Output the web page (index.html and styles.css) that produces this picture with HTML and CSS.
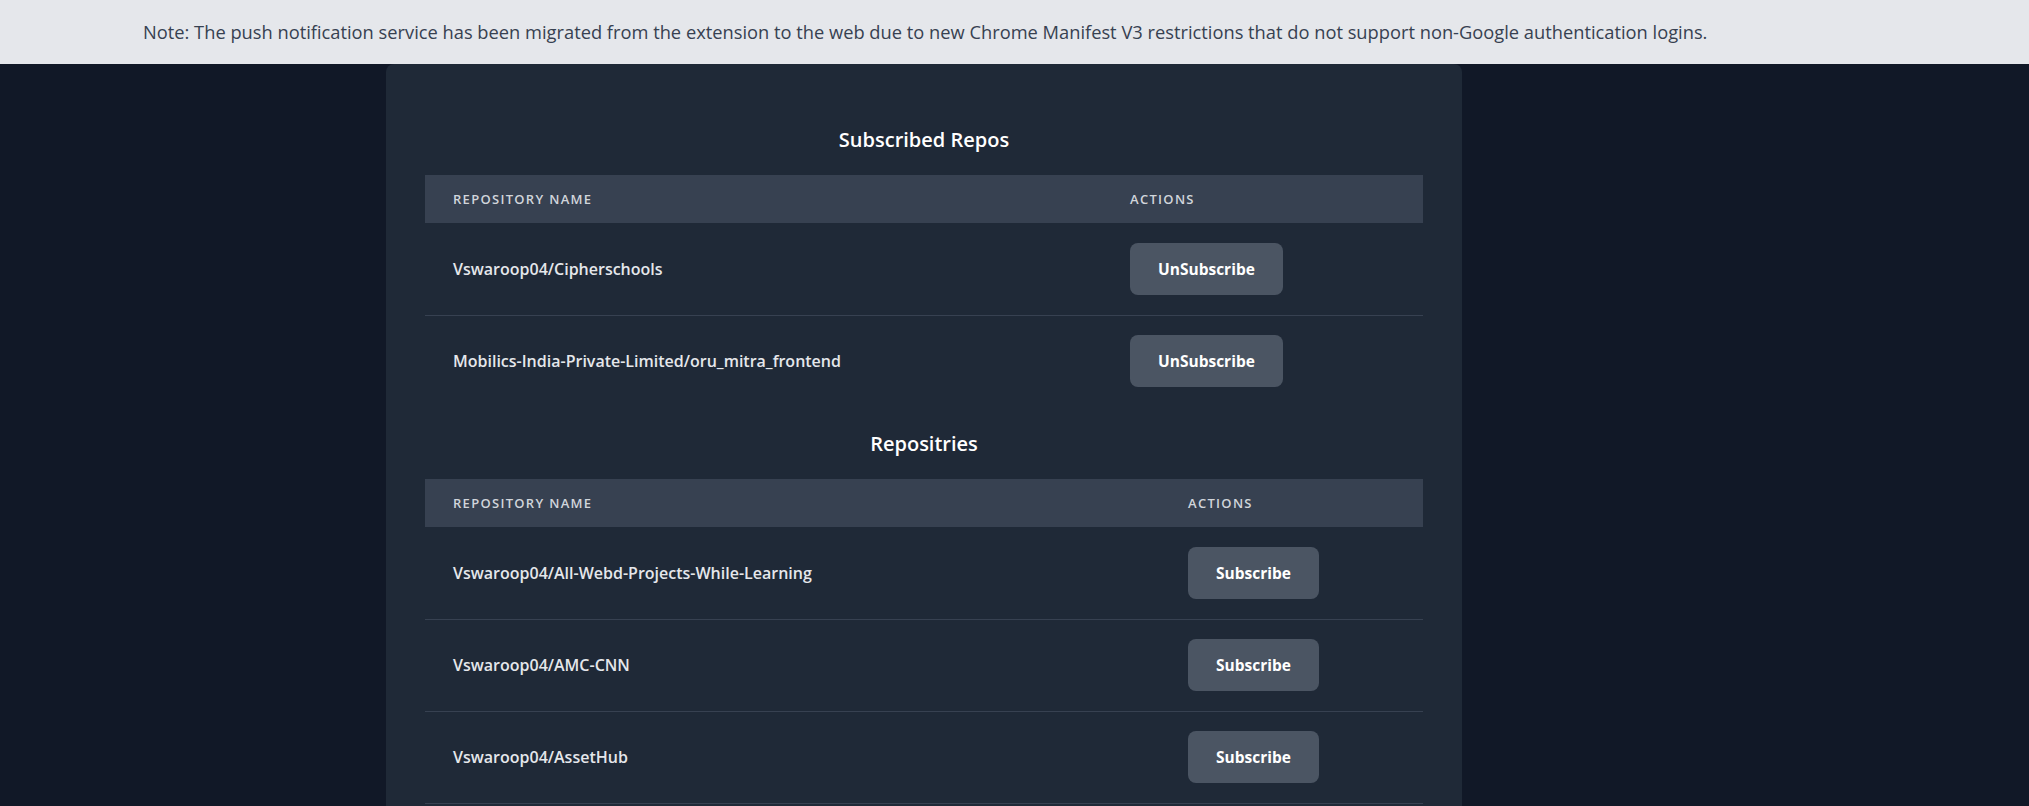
FILE: index.html
```html
<!DOCTYPE html>
<html lang="en">
<head>
<meta charset="utf-8">
<title>Repo Notifications</title>
<link rel="stylesheet" href="styles.css">
</head>
<body>
<div class="notice">
  <p class="notice-text">Note: The push notification service has been migrated from the extension to the web due to new Chrome Manifest V3 restrictions that do not support non-Google authentication logins.</p>
</div>
<main class="main">
  <section class="card">
    <h2 class="section-title first">Subscribed Repos</h2>
    <table class="repo-table">
      <colgroup>
        <col class="col-sub-name">
        <col class="col-sub-action">
      </colgroup>
      <thead>
        <tr><th>Repository Name</th><th>Actions</th></tr>
      </thead>
      <tbody>
        <tr><td class="name">Vswaroop04/Cipherschools</td><td><button class="btn">UnSubscribe</button></td></tr>
        <tr><td class="name">Mobilics-India-Private-Limited/oru_mitra_frontend</td><td><button class="btn">UnSubscribe</button></td></tr>
      </tbody>
    </table>
    <h2 class="section-title second">Repositries</h2>
    <table class="repo-table open-end">
      <colgroup>
        <col class="col-all-name">
        <col class="col-all-action">
      </colgroup>
      <thead>
        <tr><th>Repository Name</th><th>Actions</th></tr>
      </thead>
      <tbody>
        <tr><td class="name">Vswaroop04/All-Webd-Projects-While-Learning</td><td><button class="btn">Subscribe</button></td></tr>
        <tr><td class="name">Vswaroop04/AMC-CNN</td><td><button class="btn">Subscribe</button></td></tr>
        <tr><td class="name">Vswaroop04/AssetHub</td><td><button class="btn">Subscribe</button></td></tr>
      </tbody>
    </table>
  </section>
</main>
</body>
</html>
```
FILE: styles.css
```css
* { box-sizing: border-box; }
html, body { margin: 0; padding: 0; }
body {
  background: #111827;
  font-family: "Open Sans", "Noto Sans", sans-serif;
  color: #e5e7eb;
}
.notice {
  background: #e5e7eb;
  height: 64px;
  display: flex;
  align-items: center;
  padding-left: 143px;
  padding-bottom: 2px;
}
.notice-text {
  margin: 0;
  font-size: 18.3px;
  color: #374151;
}
.main {
  padding-left: 386px;
}
.card {
  width: 1076px;
  background: #1f2937;
  border-radius: 8px 8px 0 0;
  padding: 40px 39px;
}
.section-title {
  margin: 21px 0 21px;
  text-align: center;
  font-size: 20px;
  line-height: 28px;
  font-weight: 600;
  color: #ffffff;
}
.section-title.first { margin-top: 22px; }
.section-title.second { margin-top: 23px; }
.repo-table {
  width: 100%;
  border-collapse: collapse;
  table-layout: fixed;
}
.col-sub-name { width: 677px; }
.col-sub-action { width: 321px; }
.col-all-name { width: 735px; }
.col-all-action { width: 263px; }
.repo-table th {
  background: #374151;
  height: 48px;
  padding: 0 28px;
  text-align: left;
  font-size: 13px;
  font-weight: 600;
  text-transform: uppercase;
  letter-spacing: 0.1em;
  color: #d1d5db;
}
.repo-table td {
  height: 92px;
  padding: 0 28px;
  vertical-align: middle;
}
.repo-table tbody tr:not(:last-child) td,
.repo-table.open-end tbody tr td {
  border-bottom: 1px solid #374151;
}
.name {
  font-size: 16px;
  font-weight: 600;
  color: #e5e7eb;
}
.btn {
  background: #4b5563;
  color: #ffffff;
  border: none;
  border-radius: 8px;
  padding: 14px 28px;
  font-family: inherit;
  font-size: 15.5px;
  line-height: 24px;
  font-weight: 700;
  cursor: pointer;
}
```
